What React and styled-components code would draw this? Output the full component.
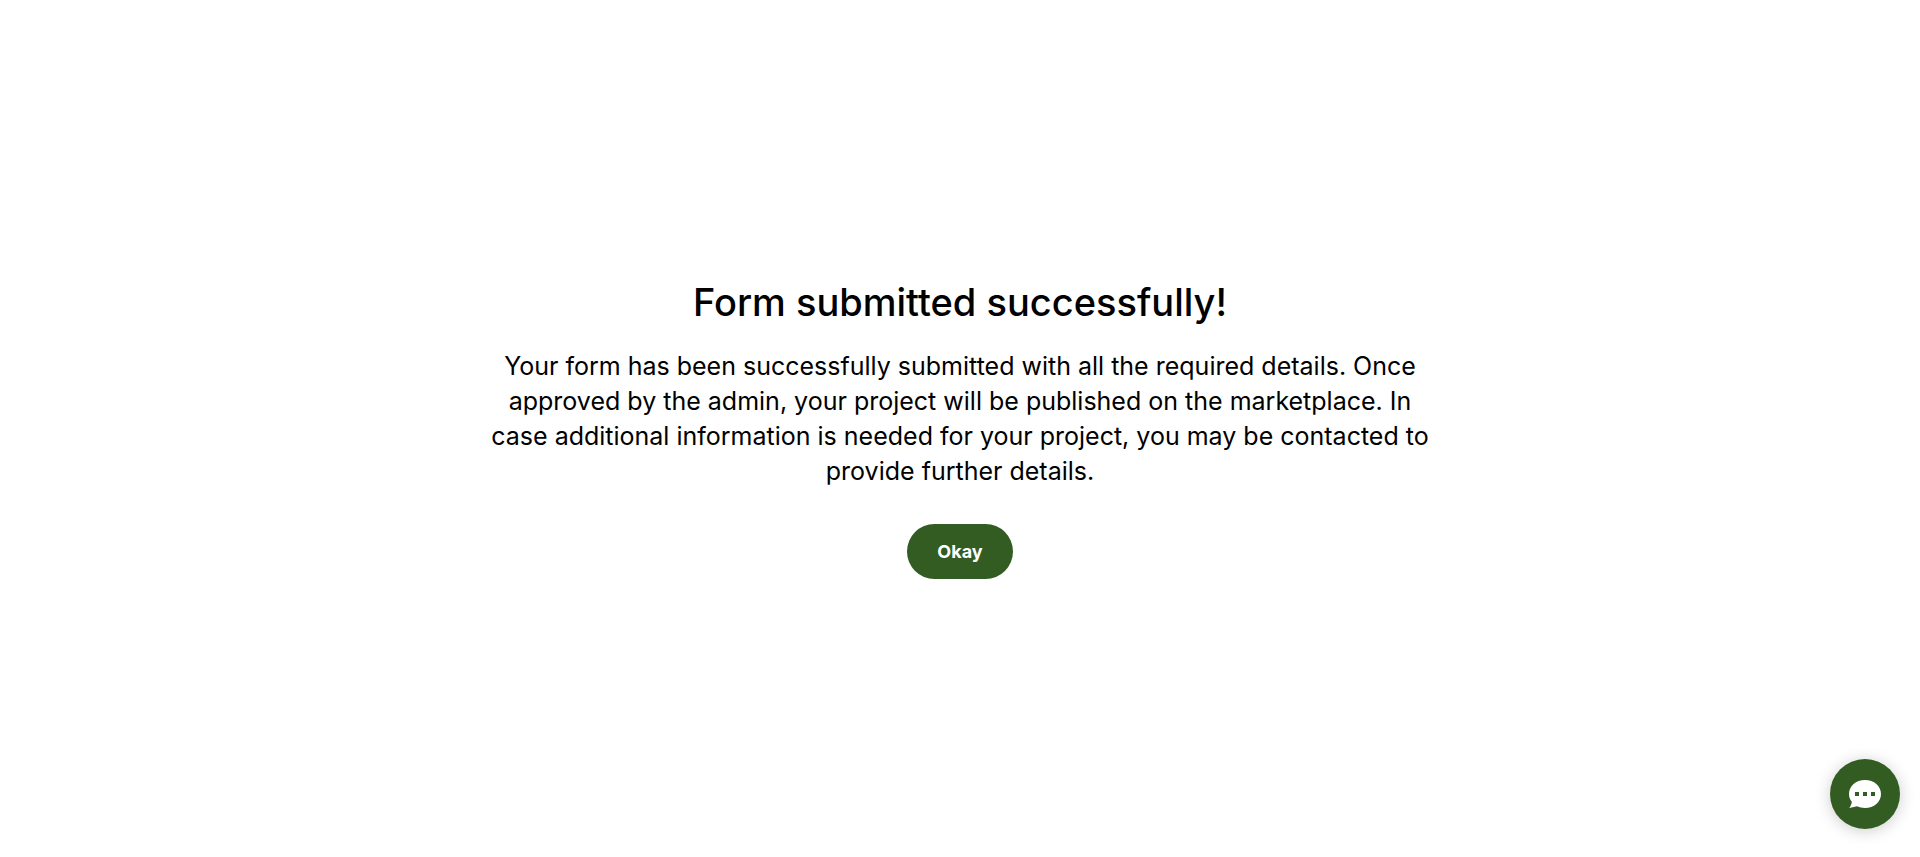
import React from "react";
import styled, { createGlobalStyle } from "styled-components";

const GlobalStyle = createGlobalStyle`
  *, *::before, *::after { box-sizing: border-box; }
  body {
    margin: 0;
    background: #fff;
    color: #000;
    font-family: Inter, "Liberation Sans", sans-serif;
  }
`;

const Page = styled.main`
  min-height: 100vh;
  padding: 24px;
  display: flex;
  flex-direction: column;
  align-items: center;
  justify-content: center;
  text-align: center;
`;

const Title = styled.h1`
  margin: 0 0 23px;
  font-size: 38px;
  line-height: 48px;
  font-weight: 500;
`;

const Message = styled.p`
  margin: 0 0 35px;
  max-width: 960px;
  font-size: 25px;
  line-height: 35px;
  font-weight: 400;
`;

const PrimaryButton = styled.button`
  height: 55px;
  padding: 0 30px;
  border: 0;
  border-radius: 28px;
  background: #325c22;
  color: #fff;
  font-family: inherit;
  font-size: 18px;
  font-weight: 700;
  cursor: pointer;
`;

const ChatButton = styled.button`
  position: fixed;
  right: 20px;
  bottom: 28px;
  width: 70px;
  height: 70px;
  padding: 0;
  display: flex;
  align-items: center;
  justify-content: center;
  border: 0;
  border-radius: 50%;
  background: #325c22;
  box-shadow: 0 2px 16px rgba(0, 0, 0, 0.2);
  cursor: pointer;
`;

const ChatIcon = () => (
  <svg width="32" height="28" viewBox="0 0 32 28" aria-hidden="true">
    <path
      fill="#fff"
      d="M16 0C25 0 32 6 32 14S25 28 16 28C13 28 10.500 27.400 8.200 26.300L0.300 28C1.700 26.200 2.600 24.200 2.800 21.800C1 19.500 0 17 0 14C0 6 7 0 16 0Z"
    />
    <path fill="#325c22" d="M6 12h4v4H6zM14 12h4v4h-4zM22 12h4v4h-4z" />
  </svg>
);

export default function App() {
  return (
    <>
      <GlobalStyle />
      <Page>
        <Title>Form submitted successfully!</Title>
        <Message>
          Your form has been successfully submitted with all the required
          details. Once approved by the admin, your project will be published
          on the marketplace. In case additional information is needed for your
          project, you may be contacted to provide further details.
        </Message>
        <PrimaryButton type="button">Okay</PrimaryButton>
      </Page>
      <ChatButton type="button" aria-label="Open chat">
        <ChatIcon />
      </ChatButton>
    </>
  );
}
